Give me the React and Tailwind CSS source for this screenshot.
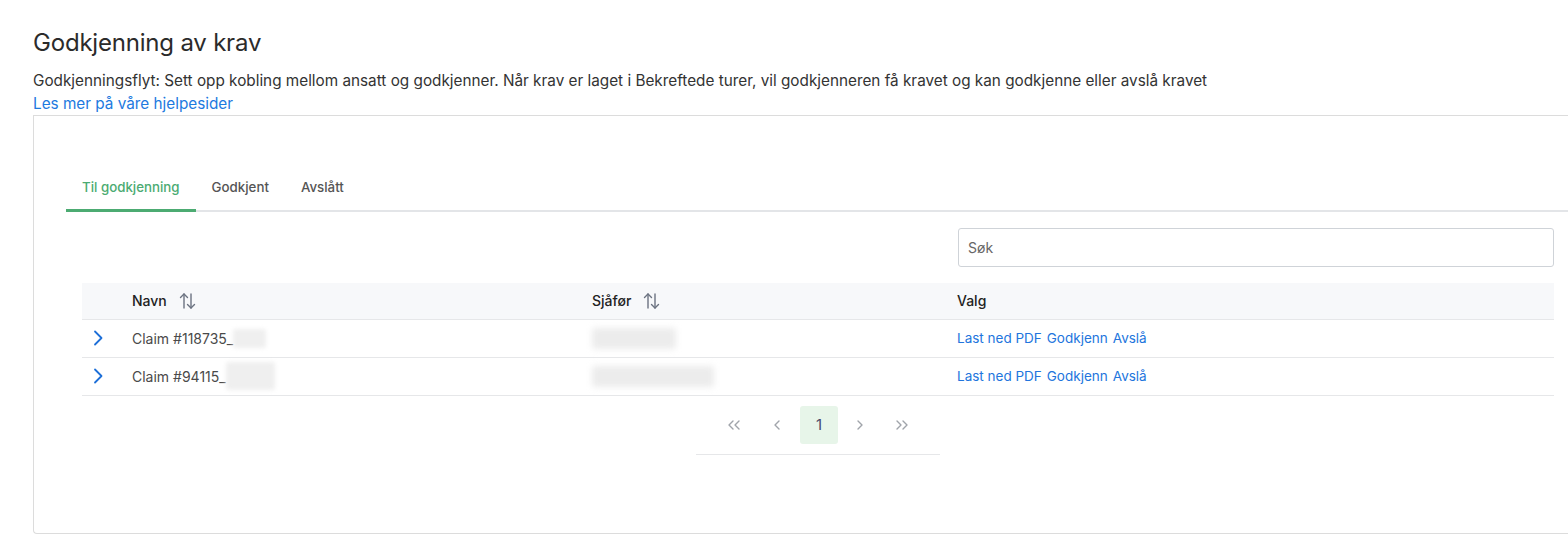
import React from "react";

function SortIcon() {
  return (
    <svg width="17" height="18" viewBox="0 0 17 18" fill="none" stroke="#6b7280" strokeWidth="1.4" strokeLinecap="round" strokeLinejoin="round" className="ml-[12px]">
      <path d="M5 16V2" />
      <path d="M1.5 5.5L5 2l3.5 3.5" />
      <path d="M12 2v14" />
      <path d="M8.5 12.5L12 16l3.5-3.5" />
    </svg>
  );
}

function Chevron() {
  return (
    <svg width="10" height="16" viewBox="0 0 10 16" fill="none" stroke="#1d6fd8" strokeWidth="1.8" strokeLinecap="round" strokeLinejoin="round">
      <path d="M2 1.5L8.5 8L2 14.5" />
    </svg>
  );
}

function Row({ name, blurW, blurH, drvW, drvH }) {
  return (
    <div className="flex h-[38px] items-center border-b border-[#e6e7e9] text-[14px] text-[#4a4a4a]">
      <div className="flex w-[40px] pl-[11px]"><Chevron /></div>
      <div className="flex w-[460px] items-center pl-[10px]">
        <span>{name}</span>
        <span className="rounded-[3px] bg-[#efefef] blur-[2px]" style={{ width: blurW, height: blurH }} />
      </div>
      <div className="w-[365px] pl-[10px]">
        <div className="rounded-[3px] bg-[#ececec] blur-[3px]" style={{ width: drvW, height: drvH }} />
      </div>
      <div className="flex gap-[5px] pl-[10px] text-[13.5px] text-[#2275dd]">
        <span>Last ned PDF</span>
        <span>Godkjenn</span>
        <span>Avslå</span>
      </div>
    </div>
  );
}

export default function App() {
  return (
    <div className="h-[542px] w-[1568px] overflow-hidden bg-white font-['Inter','Open_Sans',sans-serif] text-[#333]">
      <div className="pl-[33px] pt-[28px]">
        <h1 className="text-[24px] font-normal leading-[30px] tracking-[-0.2px] text-[#2b2b2b]">Godkjenning av krav</h1>
        <p className="mt-[12px] text-[15.3px] leading-[22px] text-[#333]">
          Godkjenningsflyt: Sett opp kobling mellom ansatt og godkjenner. Når krav er laget i Bekreftede turer, vil godkjenneren få kravet og kan godkjenne eller avslå kravet
        </p>
        <a className="block text-[15.3px] leading-[23px] text-[#1d7ae0]">Les mer på våre hjelpesider</a>
        <div className="h-[419px] rounded-bl-[4px] border-b border-l border-t border-[#dcdcdc] pl-[32px]">
          <div className="mt-[57px] flex border-b-2 border-[#e3e5e8] text-[13.3px] font-medium">
            <div className="-mb-[2px] border-b-[3px] border-[#4cab72] px-[16px] pb-[11px] pt-[5px] text-[#4cab72]">Til godkjenning</div>
            <div className="px-[16px] pb-[11px] pt-[5px] text-[#555]">Godkjent</div>
            <div className="px-[16px] pb-[11px] pt-[5px] text-[#555]">Avslått</div>
          </div>
          <div className="mr-[14px] pl-[16px]">
            <div className="mt-[16px] flex justify-end">
              <div className="flex h-[39px] w-[596px] items-center rounded-[3px] border border-[#cfd3d8] pl-[9px] text-[14px] text-[#666]">Søk</div>
            </div>
            <div className="mt-[16px]">
              <div className="flex h-[37px] items-center border-b border-[#e6e7e9] bg-[#f7f8fa] text-[14px] font-medium text-[#222]">
                <div className="w-[40px]" />
                <div className="flex w-[460px] items-center pl-[10px]">Navn<SortIcon /></div>
                <div className="flex w-[365px] items-center pl-[10px]">Sjåfør<SortIcon /></div>
                <div className="pl-[10px]">Valg</div>
              </div>
              <Row name="Claim #118735_" blurW={33} blurH={19} drvW={84} drvH={21} />
              <Row name="Claim #94115_" blurW={49} blurH={28} drvW={122} drvH={21} />
            </div>
            <div className="flex justify-center">
              <div className="flex w-[244px] justify-center border-b border-[#e6e7e9] pb-[10px] pt-[10px]">
                <div className="flex items-center text-[15px] text-[#9aa0a6]">
                  <span className="flex h-[38px] w-[38px] items-center justify-center">
                    <svg width="14" height="10" viewBox="0 0 14 10" fill="none" stroke="#a0a4aa" strokeWidth="1.4" strokeLinecap="round" strokeLinejoin="round"><path d="M6 1L2 5l4 4" /><path d="M12 1L8 5l4 4" /></svg>
                  </span>
                  <span className="ml-[5px] flex h-[38px] w-[38px] items-center justify-center">
                    <svg width="8" height="10" viewBox="0 0 8 10" fill="none" stroke="#a0a4aa" strokeWidth="1.4" strokeLinecap="round" strokeLinejoin="round"><path d="M6 1L2 5l4 4" /></svg>
                  </span>
                  <span className="ml-[4px] flex h-[38px] w-[38px] items-center justify-center rounded-[3px] bg-[#e7f5e9] text-[#4a4a6a]">1</span>
                  <span className="ml-[3px] flex h-[38px] w-[38px] items-center justify-center">
                    <svg width="8" height="10" viewBox="0 0 8 10" fill="none" stroke="#a0a4aa" strokeWidth="1.4" strokeLinecap="round" strokeLinejoin="round"><path d="M2 1l4 4-4 4" /></svg>
                  </span>
                  <span className="ml-[4px] flex h-[38px] w-[38px] items-center justify-center">
                    <svg width="14" height="10" viewBox="0 0 14 10" fill="none" stroke="#a0a4aa" strokeWidth="1.4" strokeLinecap="round" strokeLinejoin="round"><path d="M2 1l4 4-4 4" /><path d="M8 1l4 4-4 4" /></svg>
                  </span>
                </div>
              </div>
            </div>
          </div>
        </div>
      </div>
    </div>
  );
}
